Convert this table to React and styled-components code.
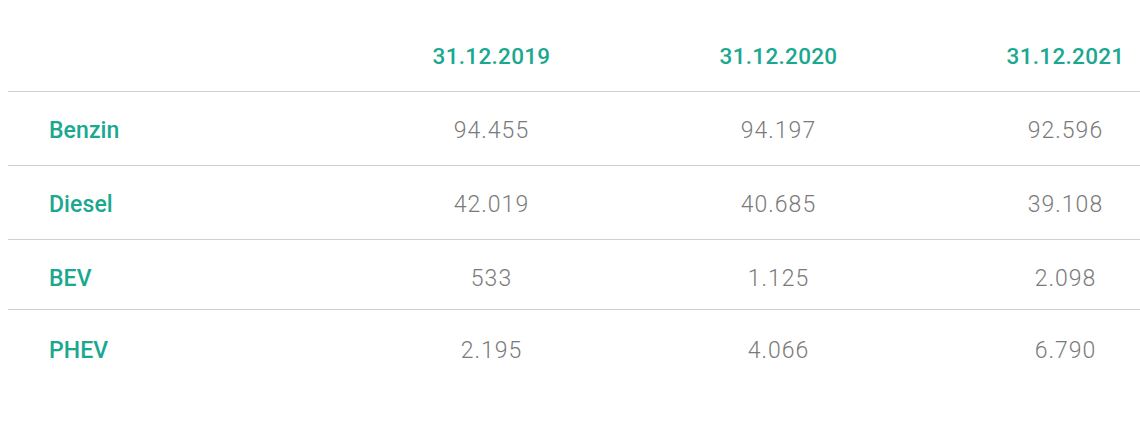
import React from "react";
import styled, { createGlobalStyle } from "styled-components";

const Global = createGlobalStyle`
  html, body { margin: 0; padding: 0; background: #fff; overflow: hidden; }
  body { margin: 8px 0 0 8px; font-family: Roboto, "Open Sans", sans-serif; }
`;

const Frame = styled.div`
  width: 1132px;
  overflow: hidden;
`;

const Table = styled.div`
  width: 1200px;
  display: flex;
  flex-direction: column;
`;

const Row = styled.div`
  display: grid;
  grid-template-columns: 340px repeat(3, 287px);
  align-items: center;
  height: ${(p) => p.$h}px;
  padding-top: ${(p) => p.$pt || 0}px;
  box-sizing: content-box;
  border-bottom: ${(p) => (p.$line ? "1px solid #cfcfcf" : "none")};
`;

const HeadCell = styled.div`
  text-align: center;
  color: #1aa891;
  font-weight: 500;
  font-size: 22.5px;
  letter-spacing: 0.3px;
`;

const Label = styled.div`
  padding-left: 41px;
  color: #1aa891;
  font-weight: 500;
  font-size: 23px;
  letter-spacing: 0.1px;
`;

const Value = styled.div`
  text-align: center;
  color: #7a7a7a;
  font-weight: 300;
  font-size: 23px;
  letter-spacing: 1px;
`;

const dates = ["31.12.2019", "31.12.2020", "31.12.2021"];
const rows = [
  { label: "Benzin", values: ["94.455", "94.197", "92.596"], pt: 4, h: 69, line: true },
  { label: "Diesel", values: ["42.019", "40.685", "39.108"], pt: 4, h: 69, line: true },
  { label: "BEV", values: ["533", "1.125", "2.098"], pt: 7, h: 62, line: true },
  { label: "PHEV", values: ["2.195", "4.066", "6.790"], pt: 9, h: 63, line: false },
];

export default function App() {
  return (
    <>
      <Global />
      <Frame>
        <Table>
          <Row $h={71} $pt={12} $line>
            <div />
            {dates.map((d) => (
              <HeadCell key={d}>{d}</HeadCell>
            ))}
          </Row>
          {rows.map((r) => (
            <Row key={r.label} $h={r.h} $pt={r.pt} $line={r.line}>
              <Label>{r.label}</Label>
              {r.values.map((v, i) => (
                <Value key={i}>{v}</Value>
              ))}
            </Row>
          ))}
        </Table>
      </Frame>
    </>
  );
}
